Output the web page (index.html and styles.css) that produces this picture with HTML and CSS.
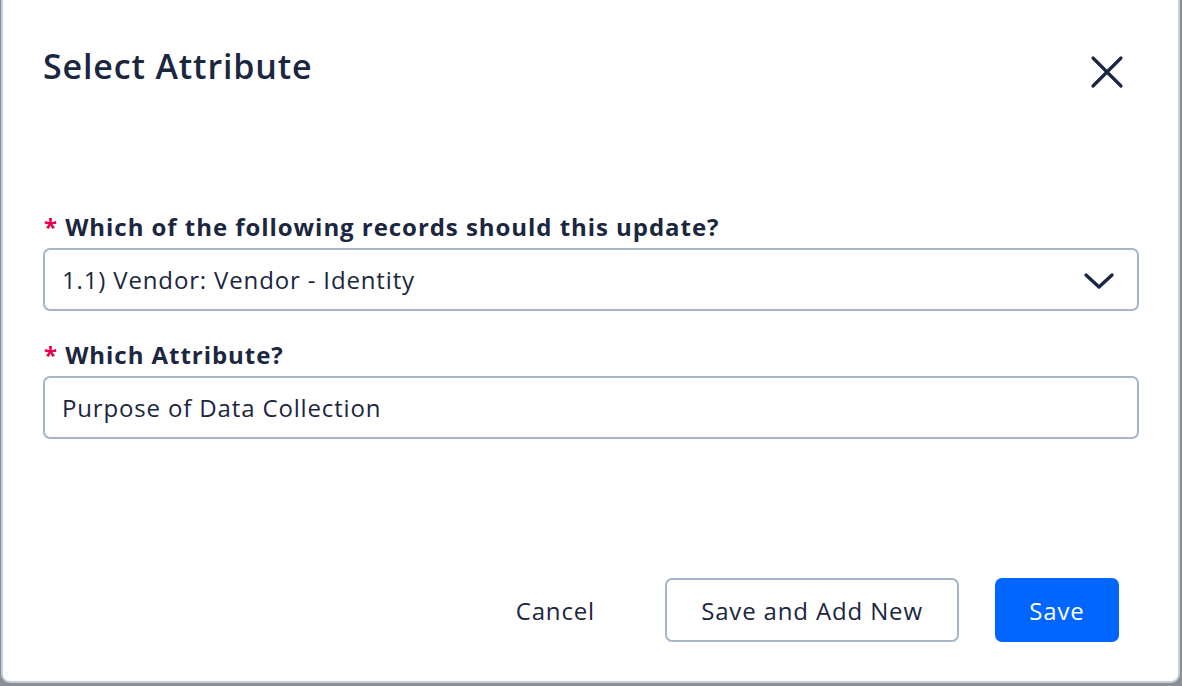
FILE: index.html
```html
<!DOCTYPE html>
<html lang="en">
<head>
<meta charset="utf-8">
<title>Select Attribute</title>
<link rel="stylesheet" href="styles.css">
</head>
<body>
<div class="dialog">
  <div class="header">
    <h1 class="title">Select Attribute</h1>
    <button class="close" aria-label="Close">
      <svg width="34" height="34" viewBox="0 0 34 34"><path d="M3 3 L31 31 M31 3 L3 31" stroke="#1b2640" stroke-width="3.2" stroke-linecap="round" fill="none"/></svg>
    </button>
  </div>
  <div class="body">
    <div class="field">
      <label class="label"><span class="req">*</span> Which of the following records should this update?</label>
      <div class="control select">
        <span class="value">1.1) Vendor: Vendor - Identity</span>
        <svg class="chevron" width="32" height="20" viewBox="0 0 32 20"><path d="M3 4 L16 16 L29 4" stroke="#1b2640" stroke-width="3.4" stroke-linecap="round" stroke-linejoin="round" fill="none"/></svg>
      </div>
    </div>
    <div class="field">
      <label class="label"><span class="req">*</span> Which Attribute?</label>
      <div class="control">
        <span class="value">Purpose of Data Collection</span>
      </div>
    </div>
  </div>
  <div class="footer">
    <button class="btn btn-link">Cancel</button>
    <button class="btn btn-outline">Save and Add New</button>
    <button class="btn btn-primary">Save</button>
  </div>
</div>
</body>
</html>
```
FILE: styles.css
```css
html, body {
  margin: 0;
  padding: 0;
  height: 686px;
  overflow: hidden;
  background: #8a8e95;
}
body {
  font-family: "Open Sans", "Noto Sans", sans-serif;
  color: #1b2640;
}
.dialog {
  box-sizing: border-box;
  margin-left: 1px;
  margin-top: -8px;
  width: 1179px;
  height: 691px;
  background: #fff;
  border: 2px solid #c3cedd;
  border-radius: 9px;
  display: flex;
  flex-direction: column;
  padding: 0 40px 0 40px;
}
.header {
  display: flex;
  justify-content: space-between;
  align-items: flex-start;
  padding-top: 49px;
}
.title {
  margin: 0;
  font-size: 34px;
  font-weight: 600;
  line-height: 46px;
  letter-spacing: 0.85px;
}
.close {
  background: none;
  border: 0;
  padding: 0;
  margin-top: 12px;
  margin-right: 14px;
  width: 34px;
  height: 34px;
  cursor: pointer;
}
.body {
  padding-top: 123px;
  display: flex;
  flex-direction: column;
  gap: 29px;
}
.field {
  display: flex;
  flex-direction: column;
  gap: 6px;
}
.label {
  font-size: 24px;
  font-weight: 700;
  line-height: 30px;
  padding-left: 1px;
  letter-spacing: 0.95px;
}
.req {
  color: #e6004c;
}
.control {
  box-sizing: border-box;
  height: 63px;
  width: 1096px;
  border: 2px solid #a5b6cc;
  border-radius: 7px;
  display: flex;
  align-items: center;
  justify-content: space-between;
  padding: 0 22px 0 17px;
  font-size: 24px;
  letter-spacing: 0.85px;
}
.chevron {
  margin-top: 2px;
}
.footer {
  margin-top: auto;
  margin-bottom: 39px;
  display: flex;
  justify-content: flex-end;
  align-items: center;
  gap: 36px;
  padding-right: 19px;
}
.btn {
  font-family: "Open Sans", "Noto Sans", sans-serif;
  font-size: 24px;
  letter-spacing: 0.85px;
  height: 64px;
  border-radius: 7px;
  cursor: pointer;
  color: #1b2640;
}
.btn-link {
  background: none;
  border: 0;
  padding: 0 32px;
  margin-right: 2px;
}
.btn-outline {
  background: #fff;
  border: 2px solid #a5b6cc;
  padding: 0;
  width: 294px;
}
.btn-primary {
  background: #0066ff;
  border: 0;
  color: #fff;
  width: 124px;
}
```
